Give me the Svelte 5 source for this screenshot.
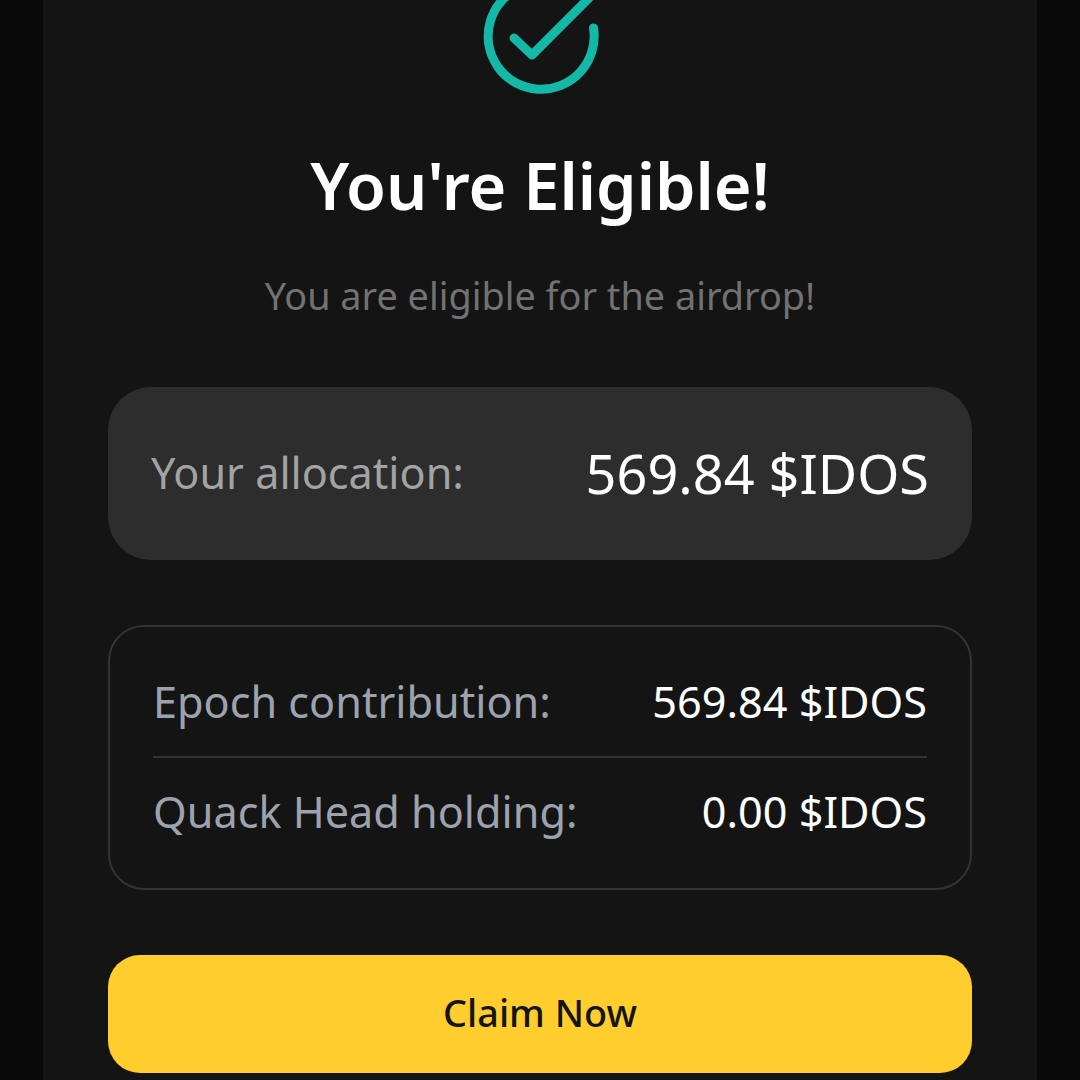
<script>
  const rows = [
    { label: 'Epoch contribution:', value: '569.84 $IDOS' },
    { label: 'Quack Head holding:', value: '0.00 $IDOS' },
  ];
</script>

<div class="page">
  <main class="panel">
    <svg class="check" width="130" height="130" viewBox="0 0 130 130" fill="none" aria-hidden="true">
      <path d="M118.5 57 A53 53 0 1 1 92 19" stroke="#14b8a6" stroke-width="9" stroke-linecap="round" />
      <path d="M39 67 L57 84 L130 11" stroke="#14b8a6" stroke-width="9" stroke-linecap="round" stroke-linejoin="round" />
    </svg>

    <h1>You're Eligible!</h1>
    <p class="sub">You are eligible for the airdrop!</p>

    <section class="allocation">
      <span class="alloc-label">Your allocation:</span>
      <span class="alloc-value">569.84 $IDOS</span>
    </section>

    <section class="details">
      {#each rows as row, i}
        <div class="row" class:first={i === 0}>
          <span class="row-label">{row.label}</span>
          <span class="row-value">{row.value}</span>
        </div>
      {/each}
    </section>

    <button class="claim">Claim Now</button>
  </main>
</div>

<style>
  :global(body) {
    margin: 0;
    background: #0a0a0a;
  }

  .page {
    width: 1080px;
    height: 1080px;
    overflow: hidden;
    display: flex;
    justify-content: center;
    font-family: 'Noto Sans', sans-serif;
  }

  .panel {
    width: 994px;
    box-sizing: border-box;
    padding: 0 65px;
    background: #141414;
    display: flex;
    flex-direction: column;
    align-items: stretch;
    flex-shrink: 0;
  }

  .check {
    display: block;
    margin: -29px auto 0;
    overflow: visible;
  }

  h1 {
    margin: 43px 0 0;
    font-size: 64.8px;
    line-height: 82px;
    font-weight: 600;
    color: #fff;
    text-align: center;
  }

  .sub {
    margin: 46px 0 0;
    font-size: 37.8px;
    line-height: 48px;
    color: #727272;
    text-align: center;
  }

  .allocation {
    margin-top: 67px;
    height: 173px;
    box-sizing: border-box;
    padding: 0 43px 2px;
    border-radius: 43px;
    background: #2d2d2d;
    display: flex;
    justify-content: space-between;
    align-items: center;
  }

  .alloc-label {
    font-size: 43.2px;
    color: #a3a3a3;
  }

  .alloc-value {
    font-size: 54px;
    color: #fff;
  }

  .details {
    margin-top: 65px;
    box-sizing: border-box;
    height: 265px;
    padding: 21px 43px;
    border: 2px solid #333;
    border-radius: 36px;
  }

  .row {
    height: 106px;
    box-sizing: border-box;
    display: flex;
    justify-content: space-between;
    align-items: center;
  }

  .row.first {
    height: 110px;
    padding-bottom: 2px;
    border-bottom: 2px solid #333;
  }

  .row-label {
    font-size: 43.2px;
    color: #9ca3af;
  }

  .row-value {
    font-size: 43.2px;
    color: #fff;
  }

  .claim {
    margin-top: 65px;
    height: 118px;
    padding: 0 0 4px;
    flex-shrink: 0;
    border: 0;
    border-radius: 32px;
    background: #ffce2e;
    color: #141414;
    font-family: inherit;
    font-size: 37.8px;
    font-weight: 500;
  }
</style>
